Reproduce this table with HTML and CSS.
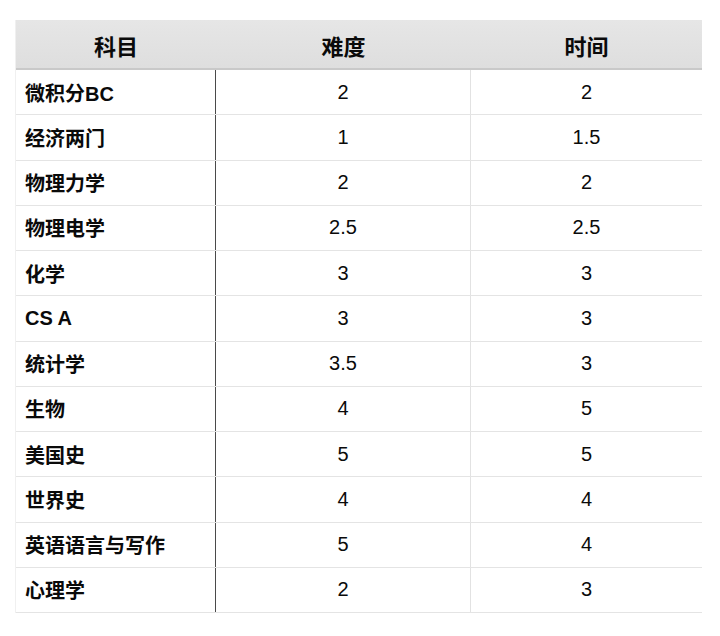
FILE: index.html
```html
<!DOCTYPE html>
<html lang="zh">
<head>
<meta charset="utf-8">
<link rel="stylesheet" href="styles.css">
</head>
<body>
<div class="sheet">
  <div class="row head">
    <div class="cell c1">科目</div>
    <div class="cell c2">难度</div>
    <div class="cell c3">时间</div>
  </div>
  <div class="row"><div class="cell c1">微积分BC</div><div class="cell c2">2</div><div class="cell c3">2</div></div>
  <div class="row"><div class="cell c1">经济两门</div><div class="cell c2">1</div><div class="cell c3">1.5</div></div>
  <div class="row"><div class="cell c1">物理力学</div><div class="cell c2">2</div><div class="cell c3">2</div></div>
  <div class="row"><div class="cell c1">物理电学</div><div class="cell c2">2.5</div><div class="cell c3">2.5</div></div>
  <div class="row"><div class="cell c1">化学</div><div class="cell c2">3</div><div class="cell c3">3</div></div>
  <div class="row"><div class="cell c1">CS A</div><div class="cell c2">3</div><div class="cell c3">3</div></div>
  <div class="row"><div class="cell c1">统计学</div><div class="cell c2">3.5</div><div class="cell c3">3</div></div>
  <div class="row"><div class="cell c1">生物</div><div class="cell c2">4</div><div class="cell c3">5</div></div>
  <div class="row"><div class="cell c1">美国史</div><div class="cell c2">5</div><div class="cell c3">5</div></div>
  <div class="row"><div class="cell c1">世界史</div><div class="cell c2">4</div><div class="cell c3">4</div></div>
  <div class="row"><div class="cell c1">英语语言与写作</div><div class="cell c2">5</div><div class="cell c3">4</div></div>
  <div class="row"><div class="cell c1">心理学</div><div class="cell c2">2</div><div class="cell c3">3</div></div>
</div>
</body>
</html>
```

FILE: styles.css
```css
html, body {
  margin: 0;
  padding: 0;
  background: #ffffff;
}
body {
  padding: 20px 19px 0 15px;
  font-family: "Liberation Sans", "Noto Sans CJK SC", sans-serif;
  color: #0a0a0a;
}
.sheet {
  width: 686px;
  border-left: 1px solid #f0f0f0;
}
.row {
  display: grid;
  grid-template-columns: 200px 255px 231px;
  height: 45.25px;
  box-sizing: border-box;
  border-bottom: 1px solid #e4e4e4;
}
.row.head {
  height: 50px;
  background: linear-gradient(#e6e6e6, #dedede);
  border-bottom: 2px solid #c9c9c9;
}
.cell {
  display: flex;
  align-items: center;
  box-sizing: border-box;
}
.head .cell {
  justify-content: center;
  font-size: 22px;
  font-weight: bold;
  padding-top: 1px;
}
.c1 {
  padding-left: 9px;
  font-size: 20px;
  font-weight: bold;
  border-right: 1px solid #4a4a4a;
}
.c2, .c3 {
  justify-content: center;
  font-size: 20px;
}
.c2 {
  border-right: 1px solid #e2e2e2;
}
.head .c1 {
  padding-left: 0;
  border-right: none;
}
.head .c2 {
  border-right: none;
}
```
